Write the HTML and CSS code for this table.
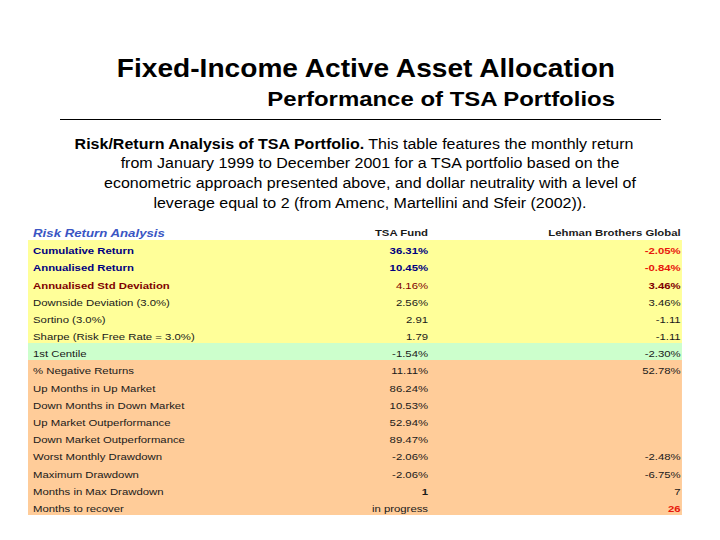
FILE: index.html
```html
<!DOCTYPE html>
<html lang="en">
<head>
<meta charset="utf-8">
<title>Fixed-Income Active Asset Allocation</title>
<link rel="stylesheet" href="styles.css">
</head>
<body>
<div class="slide">
  <header class="head">
    <h1 class="title">Fixed-Income Active Asset Allocation</h1>
    <h2 class="subtitle">Performance of TSA Portfolios</h2>
  </header>
  <hr class="rule">
  <p class="caption"><b>Risk/Return Analysis of TSA Portfolio.</b> This table features the monthly return<br>from January 1999 to December 2001 for a TSA portfolio based on the<br>econometric approach presented above, and dollar neutrality with a level of<br>leverage equal to 2 (from Amenc, Martellini and Sfeir (2002)).</p>
  <div class="table-wrap">
    <table class="rr">
      <colgroup><col class="c1"><col class="c2"><col class="c3"></colgroup>
      <tr class="hdr"><td class="ttl">Risk Return Analysis</td><td class="num b">TSA Fund</td><td class="num b">Lehman Brothers Global</td></tr>
      <tr class="y"><td class="navy b">Cumulative Return</td><td class="num navy b">36.31%</td><td class="num red b">-2.05%</td></tr>
      <tr class="y"><td class="navy b">Annualised Return</td><td class="num navy b">10.45%</td><td class="num red b">-0.84%</td></tr>
      <tr class="y"><td class="maroon b">Annualised Std Deviation</td><td class="num maroon">4.16%</td><td class="num maroon b">3.46%</td></tr>
      <tr class="y"><td>Downside Deviation (3.0%)</td><td class="num">2.56%</td><td class="num">3.46%</td></tr>
      <tr class="y"><td>Sortino (3.0%)</td><td class="num">2.91</td><td class="num">-1.11</td></tr>
      <tr class="y"><td>Sharpe (Risk Free Rate = 3.0%)</td><td class="num">1.79</td><td class="num">-1.11</td></tr>
      <tr class="g"><td>1st Centile</td><td class="num">-1.54%</td><td class="num">-2.30%</td></tr>
      <tr class="o"><td>% Negative Returns</td><td class="num">11.11%</td><td class="num">52.78%</td></tr>
      <tr class="o"><td>Up Months in Up Market</td><td class="num">86.24%</td><td class="num"></td></tr>
      <tr class="o"><td>Down Months in Down Market</td><td class="num">10.53%</td><td class="num"></td></tr>
      <tr class="o"><td>Up Market Outperformance</td><td class="num">52.94%</td><td class="num"></td></tr>
      <tr class="o"><td>Down Market Outperformance</td><td class="num">89.47%</td><td class="num"></td></tr>
      <tr class="o"><td>Worst Monthly Drawdown</td><td class="num">-2.06%</td><td class="num">-2.48%</td></tr>
      <tr class="o"><td>Maximum Drawdown</td><td class="num">-2.06%</td><td class="num">-6.75%</td></tr>
      <tr class="o"><td>Months in Max Drawdown</td><td class="num b">1</td><td class="num">7</td></tr>
      <tr class="o"><td>Months to recover</td><td class="num">in progress</td><td class="num red b">26</td></tr>
    </table>
  </div>
</div>
</body>
</html>
```
FILE: styles.css
```css
html, body {
  margin: 0;
  padding: 0;
  background: #fff;
}
body {
  font-family: "Liberation Sans", Arial, sans-serif;
  color: #000;
}
.slide {
  width: 720px;
  height: 540px;
  overflow: hidden;
}
.head {
  padding: 54px 105px 0 0;
  text-align: right;
}
.title {
  margin: 0;
  font-size: 25px;
  line-height: 28px;
  font-weight: bold;
  transform: scaleX(1.124);
  transform-origin: right center;
}
.subtitle {
  margin: 5.4px 0 0;
  font-size: 20px;
  line-height: 24px;
  font-weight: bold;
  transform: scaleX(1.197);
  transform-origin: right center;
}
.rule {
  margin: 7.6px 0 0 60px;
  width: 601px;
  height: 0;
  border: 0;
  border-top: 1px solid #000;
}
.caption {
  margin: 14.9px 0 0 90px;
  width: 560px;
  font-size: 14px;
  line-height: 19.6px;
  text-align: center;
  text-indent: -28px;
  color: #000;
  transform: scaleX(1.143);
  transform-origin: 280px 0;
}
.table-wrap {
  margin: 9.7px 0 0 28px;
  width: 519px;
  transform: scaleX(1.26);
  transform-origin: 0 0;
}
.rr {
  width: 519px;
  table-layout: fixed;
  border-collapse: collapse;
  border-spacing: 0;
  font-size: 9px;
  color: #1a1a1a;
}
.c1 { width: 250px; }
.c2 { width: 100px; }
.c3 { width: 169px; }
.rr tr { height: 17.2px; }
.rr tr.hdr { height: 17px; }
.rr td {
  padding: 0 0 0 4px;
  line-height: 11px;
  vertical-align: bottom;
  white-space: nowrap;
}
.rr td.num {
  text-align: right;
  padding-left: 0;
  padding-right: 32.5px;
}
.rr td.num:last-child { padding-right: 1px; }
.rr tr.hdr td { padding-bottom: 1px; }
.rr .ttl {
  font-size: 10.5px;
  font-weight: bold;
  font-style: italic;
  color: #3a55c4;
}
.y { background: #ffff99; }
.g { background: #ccffcc; }
.o { background: #ffcc99; }
.b { font-weight: bold; }
.navy { color: #000080; }
.maroon { color: #800000; }
.red { color: #e8180c; }
```
